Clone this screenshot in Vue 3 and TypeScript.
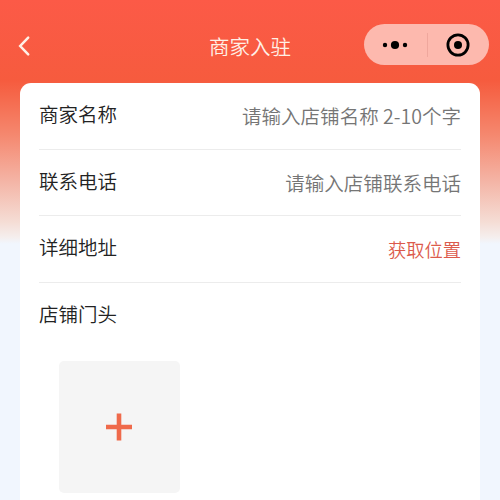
<script setup lang="ts">
interface Field {
  label: string
  hint?: string
  action?: string
}

const fields: Field[] = [
  { label: '商家名称', hint: '请输入店铺名称 2-10个字' },
  { label: '联系电话', hint: '请输入店铺联系电话' },
  { label: '详细地址', action: '获取位置' },
]
</script>

<template>
  <div class="page">
    <header class="nav">
      <svg class="back" viewBox="0 0 14 22"><path d="M11.2 2.7 3.2 11l8 8.3" /></svg>
      <h1>商家入驻</h1>
      <div class="capsule">
        <svg class="dots" viewBox="0 0 26 10">
          <circle cx="3" cy="5" r="2.2" /><circle cx="13" cy="5" r="4.1" /><circle cx="23" cy="5" r="2.2" />
        </svg>
        <span class="sep"></span>
        <svg class="target" viewBox="0 0 24 24">
          <circle class="ring" cx="12" cy="12" r="10.1" /><circle cx="12" cy="12" r="4" />
        </svg>
      </div>
    </header>
    <main class="card">
      <div v-for="field in fields" :key="field.label" class="row">
        <label>{{ field.label }}</label>
        <span v-if="field.hint" class="hint">{{ field.hint }}</span>
        <span v-else class="action">{{ field.action }}</span>
      </div>
      <section class="photo">
        <label>店铺门头</label>
        <button class="upload" type="button">
          <svg viewBox="0 0 28 28"><path d="M14 .5v27M1 14h26" /></svg>
        </button>
      </section>
    </main>
  </div>
</template>

<style>
body { margin: 0; }
</style>

<style scoped>
.page {
  box-sizing: border-box;
  height: 500px;
  overflow: hidden;
  background: linear-gradient(180deg, #fc5a47 0, #f65b3e 80px, #f5674a 95px, #f5886f 135px, #f4b3a4 180px, #f5ddd5 222px, #f5eeed 237px, #f1f6fe 244px);
  font-family: "Noto Sans CJK SC", sans-serif;
  font-weight: 350;
}
.nav {
  display: grid;
  grid-template-columns: 1fr auto 1fr;
  align-items: center;
  height: 83px;
  padding: 6px 11px 0 17px;
  box-sizing: border-box;
}
.back { width: 14px; height: 22px; padding-top: 2px; fill: none; stroke: #fff0e6; stroke-width: 2.5; stroke-linecap: round; }
h1 { margin: 3px 6px 0 0; font-size: 20.5px; line-height: 30px; font-weight: inherit; color: #fff0e6; }
.capsule {
  justify-self: end;
  display: flex;
  align-items: center;
  justify-content: space-between;
  box-sizing: border-box;
  width: 125px;
  height: 41px;
  padding: 0 18.7px 0 17.7px;
  border-radius: 21px;
  background: #fdb9ae;
}
.dots { width: 26px; height: 10px; }
.sep { width: 1px; height: 24px; background: #efa79d; }
.target { width: 24px; height: 24px; }
.ring { fill: none; stroke: #000; stroke-width: 2.8; }
.card {
  margin: 0 20px;
  padding: 0 19px;
  height: 430px;
  border-radius: 11px 11px 0 0;
  background: #fff;
  box-sizing: border-box;
}
.row {
  display: flex;
  justify-content: space-between;
  align-items: center;
  box-sizing: border-box;
  height: 66.5px;
  border-bottom: 1px solid #ececec;
}
label { font-size: 19.5px; line-height: 28px; color: #222; }
.row label { padding-bottom: 3px; }
.hint { font-size: 19.55px; color: #757575; }
.action { font-size: 18.3px; color: #dc5a4c; }
.photo { padding-top: 17px; }
.photo label { display: block; }
.upload {
  display: flex;
  align-items: center;
  justify-content: center;
  width: 121px;
  height: 132px;
  margin: 33px 0 0 20px;
  padding: 0 2px 0 0;
  border: 0;
  border-radius: 5px;
  background: #f5f5f5;
}
.upload svg { width: 28px; height: 28px; fill: none; stroke: #ef6a4b; stroke-width: 4.6; }
</style>
